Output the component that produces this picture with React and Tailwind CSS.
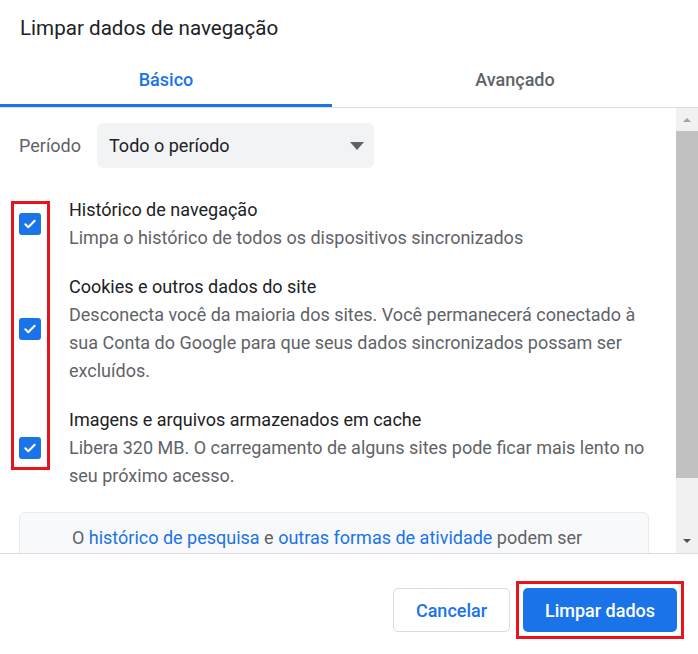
const items = [
  {
    title: "Histórico de navegação",
    desc: "Limpa o histórico de todos os dispositivos sincronizados",
  },
  {
    title: "Cookies e outros dados do site",
    desc: "Desconecta você da maioria dos sites. Você permanecerá conectado à sua Conta do Google para que seus dados sincronizados possam ser excluídos.",
  },
  {
    title: "Imagens e arquivos armazenados em cache",
    desc: "Libera 320 MB. O carregamento de alguns sites pode ficar mais lento no seu próximo acesso.",
  },
];

function Checkbox() {
  return (
    <div className="w-[22px] h-[22px] rounded-[3px] bg-[#1a73e8] flex items-center justify-center shrink-0">
      <svg width="14" height="14" viewBox="0 0 24 24" fill="none">
        <path d="M4 12.5l5 5L20 6.5" stroke="white" strokeWidth="3.6" strokeLinecap="round" strokeLinejoin="round" />
      </svg>
    </div>
  );
}

function Scrollbar() {
  return (
    <div className="w-[22px] shrink-0 bg-[#f1f1f1] flex flex-col">
      <div className="h-[23px] flex items-center justify-center">
        <div className="w-0 h-0 border-l-[4px] border-r-[4px] border-b-[4px] border-l-transparent border-r-transparent border-b-[#a3a3a3]" />
      </div>
      <div className="h-[347px] bg-[#c1c1c1]" />
      <div className="flex-1 flex items-end justify-center pb-[10px]">
        <div className="w-0 h-0 border-l-[4px] border-r-[4px] border-t-[4px] border-l-transparent border-r-transparent border-t-[#505050]" />
      </div>
    </div>
  );
}

export default function App() {
  return (
    <div className="w-[698px] h-[654px] bg-white flex flex-col overflow-hidden font-['Roboto',sans-serif]">
      <h1 className="h-[52px] shrink-0 flex items-center px-5 pt-[4px] text-[20.6px] text-[#202124]">
        Limpar dados de navegação
      </h1>

      <div className="flex shrink-0 border-b border-[#e0e0e0]">
        <div className="w-[332px] h-[55px] flex items-center justify-center pt-[2px] border-b-[3px] border-[#1a73e8] text-[18px] font-medium text-[#1a73e8]">
          Básico
        </div>
        <div className="flex-1 h-[55px] flex items-center justify-center pt-[2px] border-b-[3px] border-transparent text-[18px] font-medium text-[#5f6368]">
          Avançado
        </div>
      </div>

      <div className="h-[445px] shrink-0 flex overflow-hidden">
        <div className="flex-1 pl-[19px] pr-[27px] pt-[15px]">
          <div className="flex items-center">
            <span className="w-[78px] text-[18px] text-[#5f6368]">Período</span>
            <div className="w-[277px] h-[45px] rounded-[6px] bg-[#f1f3f4] flex items-center justify-between pl-3 pr-[10px]">
              <span className="text-[18px] text-[#202124]">Todo o período</span>
              <div className="w-0 h-0 border-l-[7px] border-r-[7px] border-t-[8px] border-l-transparent border-r-transparent border-t-[#5f6368]" />
            </div>
          </div>

          <div className="mt-[28px] flex flex-col gap-[21px] relative">
            {items.map((it) => (
              <div key={it.title} className="flex items-center gap-[28px]">
                <Checkbox />
                <div className="flex-1 text-[18px] leading-[28px]">
                  <div className="text-[#202124]">{it.title}</div>
                  <div className="text-[#5f6368]">{it.desc}</div>
                </div>
              </div>
            ))}
            <div className="absolute left-[-8px] top-[5px] w-[39px] h-[269px] border-[3px] border-[#e8141c] pointer-events-none" />
          </div>

          <div className="mt-[22px] rounded-[6px] border border-[#e8eaed] bg-[#f8f9fa] pt-[11px] pb-3 pl-[40px] pr-[54px] text-center text-[18px] leading-[28px] text-[#5f6368]">
            O <span className="text-[#1a73e8]">histórico de pesquisa</span> e{" "}
            <span className="text-[#1a73e8]">outras formas de atividade</span> podem ser armazenadas na sua Conta do Google quando você faz login. Você pode excluí-las quando quiser.
          </div>
        </div>
        <Scrollbar />
      </div>

      <div className="flex-1 border-t border-[#dadce0] flex items-start justify-end gap-[6px] pt-[27px] pr-[14px]">
        <button className="mt-[7px] w-[117px] h-[44px] rounded-[5px] border border-[#dadce0] bg-white text-[18px] font-medium text-[#1a73e8]">
          Cancelar
        </button>
        <div className="border-[3px] border-[#e8141c] p-[4px]">
          <button className="w-[154px] h-[44px] rounded-[5px] bg-[#1a73e8] text-[18px] font-medium text-white block">
            Limpar dados
          </button>
        </div>
      </div>
    </div>
  );
}
